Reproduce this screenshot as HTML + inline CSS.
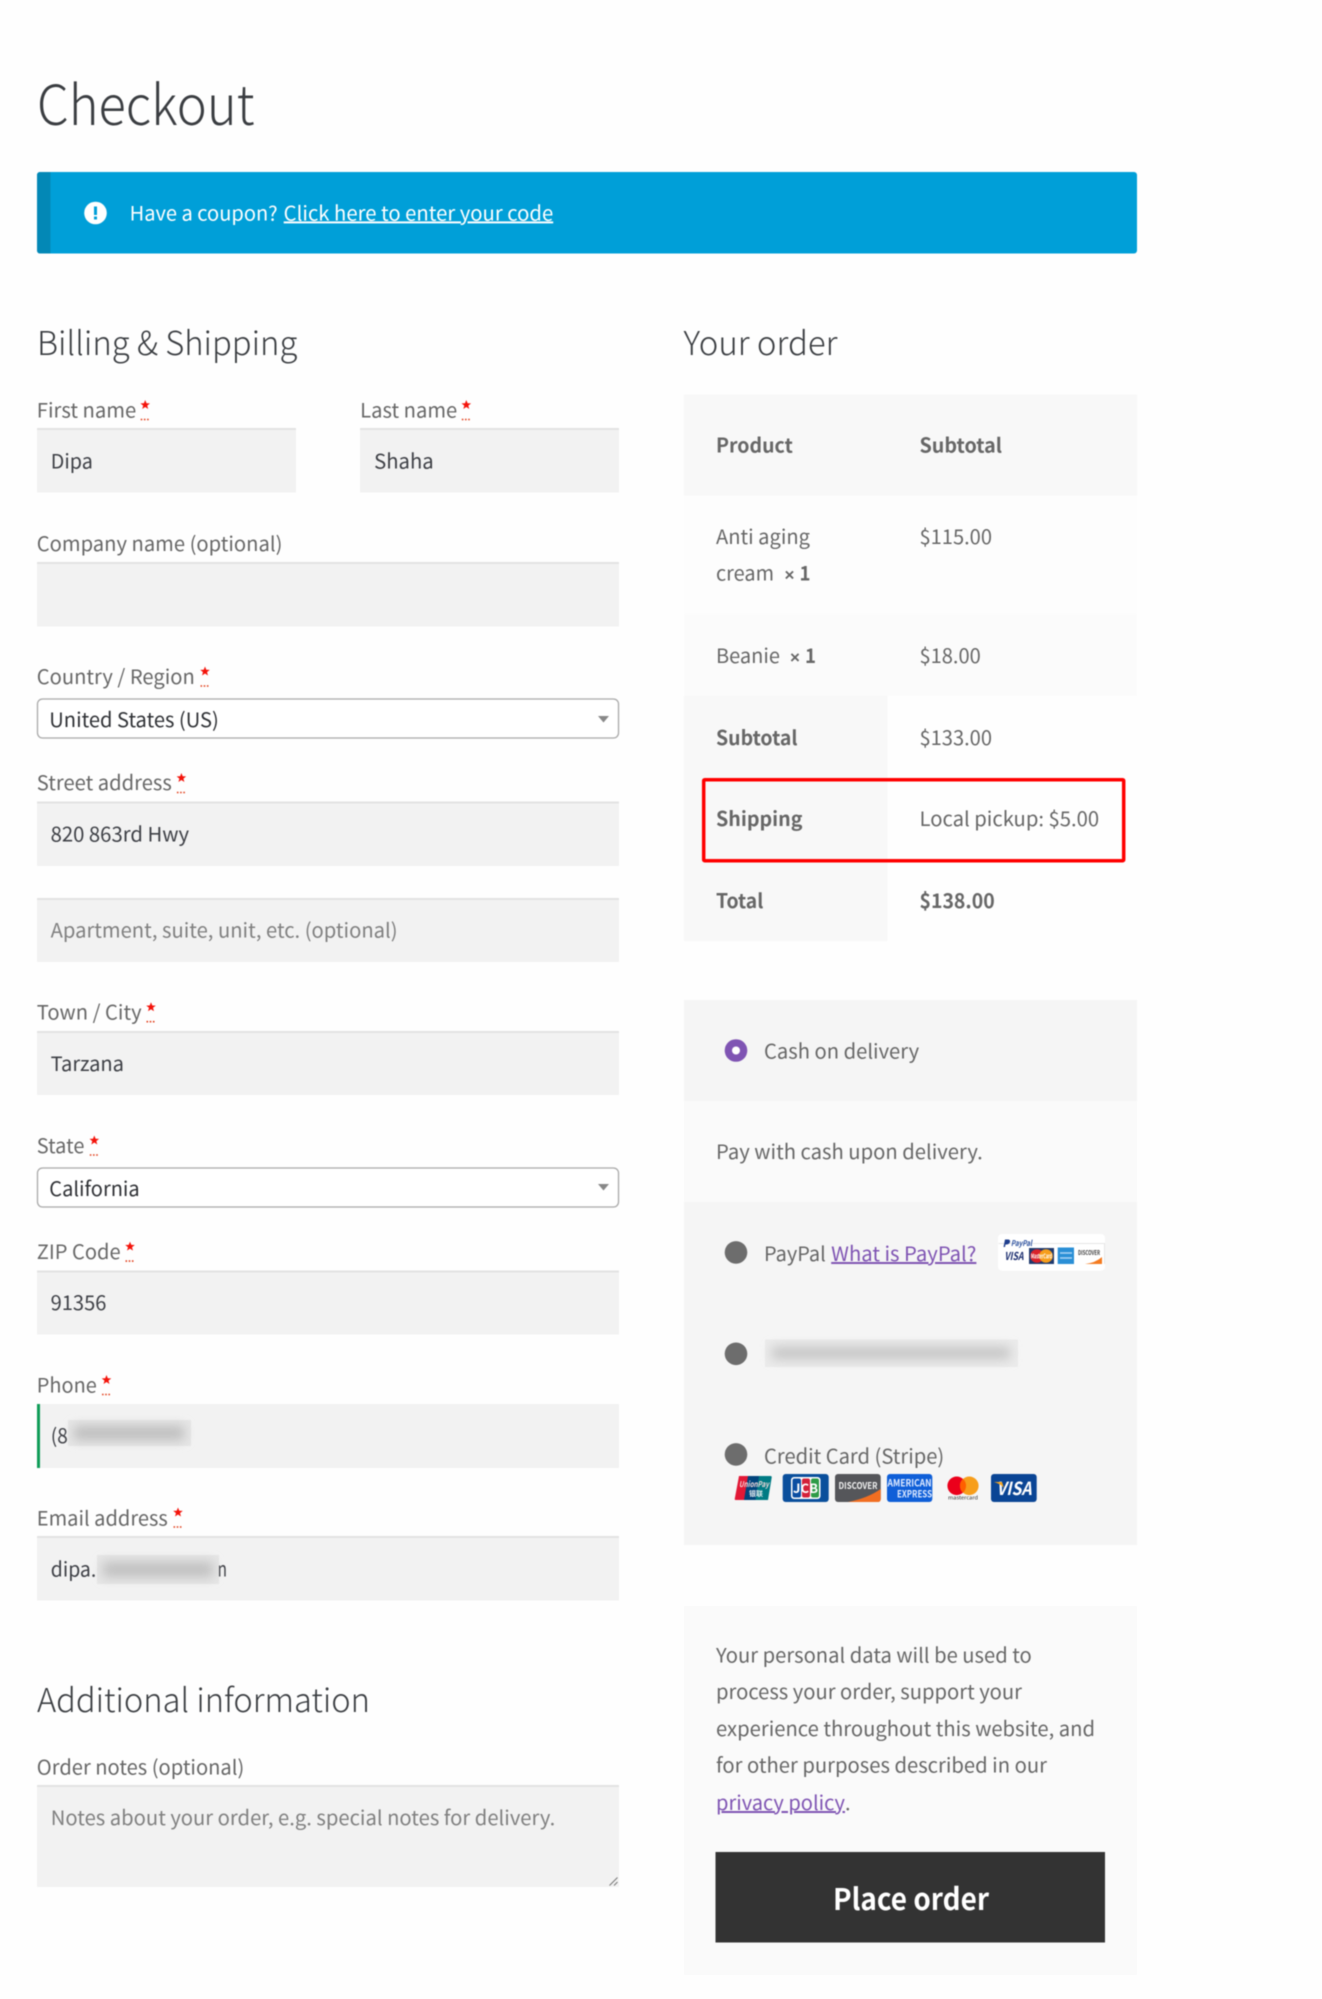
<!DOCTYPE html>
<html lang="en"><head><meta charset="utf-8"><title>Checkout</title>
<style>
html,body{margin:0;padding:0;background:#fff;width:1322px;height:1999px;overflow:hidden}
svg{display:block;filter:blur(.4px)}
text{font-family:"Noto Sans CJK JP","Noto Sans CJK SC","Liberation Sans",sans-serif;font-size:20px;fill:#676767;white-space:pre}
.v{fill:#3e4046}
.s{fill:#2f3135}
.p{fill:#808080}
.b{font-weight:700;fill:#676767}
.h{font-weight:300;fill:#3a3d41;font-size:33px}
.a{fill:#7f54b3;text-decoration:underline}
.x{font-family:"Liberation Sans",sans-serif;font-weight:700;font-size:17px}
.i{fill:#f2f2f2}
.t{fill:#e3e3e3}
</style></head><body>
<svg width="1322" height="1999" viewBox="0 0 1322 1999" xmlns="http://www.w3.org/2000/svg">
<defs>
<filter id="bl" x="-20%" y="-100%" width="140%" height="300%"><feGaussianBlur stdDeviation="5.500"/></filter>
<g id="star"><path d="M0-5 1.300-1.700 4.800-1.600 2 .6 3 4 0 2-3 4-2 .6-4.800-1.600-1.300-1.700Z" fill="#f4130a"/><path d="M-4.500 14.500h9" stroke="#e2401c" stroke-width="1.600" stroke-dasharray="1.600 1.600" fill="none"/></g>
</defs>
<rect width="1322" height="1999" fill="#fefefe"/>

<text class="h" x="37" y="125" style="font-size:55px" textLength="217.500" lengthAdjust="spacingAndGlyphs">Checkout</text>

<rect x="37" y="172" width="1100" height="81.500" rx="3" fill="#009fd8"/>
<path d="M40 172h10.500v81.500H40a3 3 0 0 1-3-3v-75.500a3 3 0 0 1 3-3z" fill="#0388b6"/>
<circle cx="95.500" cy="213" r="11.300" fill="#fff"/>
<rect x="94" y="206.500" width="3" height="8.500" fill="#009fd8"/><rect x="94" y="216.500" width="3" height="3" fill="#009fd8"/>
<text x="129.600" y="220.400" style="fill:#fff" textLength="148" lengthAdjust="spacingAndGlyphs">Have a coupon?</text>
<text x="283.700" y="220.400" style="fill:#fff;text-decoration:underline" textLength="269.500" lengthAdjust="spacingAndGlyphs">Click here to enter your code</text>

<text class="h" x="37" y="355.200" textLength="260.300" lengthAdjust="spacingAndGlyphs">Billing &amp; Shipping</text>
<text class="h" x="683.500" y="355.200" textLength="154" lengthAdjust="spacingAndGlyphs">Your order</text>

<!-- left fields -->
<text x="36.800" y="417.300" textLength="99.500" lengthAdjust="spacingAndGlyphs">First name</text><use href="#star" x="145.200" y="405"/>
<text x="360.200" y="417.300" textLength="97" lengthAdjust="spacingAndGlyphs">Last name</text><use href="#star" x="466.300" y="405"/>
<rect class="i" x="37" y="428" width="259" height="64.500"/><rect class="t" x="37" y="428" width="259" height="2"/>
<rect class="i" x="360" y="428" width="259" height="64.500"/><rect class="t" x="360" y="428" width="259" height="2"/>
<text class="v" x="50.800" y="468.400" textLength="42" lengthAdjust="spacingAndGlyphs">Dipa</text>
<text class="v" x="374.200" y="468.400" textLength="59.500" lengthAdjust="spacingAndGlyphs">Shaha</text>

<text x="36.800" y="551" textLength="245.600" lengthAdjust="spacingAndGlyphs">Company name (optional)</text>
<rect class="i" x="37" y="562" width="582" height="64.500"/><rect class="t" x="37" y="562" width="582" height="2"/>

<text x="36.800" y="684" textLength="158" lengthAdjust="spacingAndGlyphs">Country / Region</text><use href="#star" x="205" y="671.500"/>
<rect x="37.500" y="699" width="581" height="39" rx="5" fill="#fff" stroke="#a9a9a9" stroke-width="1.300"/>
<text class="s" x="49.300" y="726.800" textLength="169.500" lengthAdjust="spacingAndGlyphs">United States (US)</text>
<path d="M598 716h11l-5.500 6.500z" fill="#888"/>

<text x="36.800" y="790.200" textLength="135" lengthAdjust="spacingAndGlyphs">Street address</text><use href="#star" x="181.400" y="778"/>
<rect class="i" x="37" y="801.500" width="582" height="64.500"/><rect class="t" x="37" y="801.500" width="582" height="2"/>
<text class="v" x="50.600" y="841.700" textLength="138.500" lengthAdjust="spacingAndGlyphs">820 863rd Hwy</text>

<rect class="i" x="37" y="898" width="582" height="64"/><rect class="t" x="37" y="898" width="582" height="2"/>
<text class="p" x="50.600" y="937.700" textLength="347" lengthAdjust="spacingAndGlyphs">Apartment, suite, unit, etc. (optional)</text>

<text x="36.800" y="1019.700" textLength="104.800" lengthAdjust="spacingAndGlyphs">Town / City</text><use href="#star" x="151" y="1007.200"/>
<rect class="i" x="37" y="1031" width="582" height="64"/><rect class="t" x="37" y="1031" width="582" height="2"/>
<text class="v" x="50.600" y="1071" textLength="73.400" lengthAdjust="spacingAndGlyphs">Tarzana</text>

<text x="36.800" y="1153" textLength="47.600" lengthAdjust="spacingAndGlyphs">State</text><use href="#star" x="94.300" y="1140.500"/>
<rect x="37.500" y="1168" width="581" height="39" rx="5" fill="#fff" stroke="#a9a9a9" stroke-width="1.300"/>
<text class="s" x="49.300" y="1195.800" textLength="90.400" lengthAdjust="spacingAndGlyphs">California</text>
<path d="M598 1184h11l-5.500 6.500z" fill="#888"/>

<text x="36.800" y="1259" textLength="83.800" lengthAdjust="spacingAndGlyphs">ZIP Code</text><use href="#star" x="130" y="1246.600"/>
<rect class="i" x="37" y="1270.500" width="582" height="64"/><rect class="t" x="37" y="1270.500" width="582" height="2"/>
<text class="v" x="50.600" y="1310" textLength="55.800" lengthAdjust="spacingAndGlyphs">91356</text>

<text x="36.800" y="1392.600" textLength="60" lengthAdjust="spacingAndGlyphs">Phone</text><use href="#star" x="106.500" y="1380"/>
<rect class="i" x="37" y="1404" width="582" height="64"/><rect x="37" y="1404" width="3" height="64" fill="#0f9d58"/>
<text class="v" x="50.800" y="1443" textLength="17" lengthAdjust="spacingAndGlyphs">(8</text>
<rect x="68" y="1420" width="123" height="26" fill="#e6e6e6"/>
<g filter="url(#bl)"><rect x="74" y="1426" width="110" height="14" fill="#bdbdbd"/></g>

<text x="36.800" y="1525.400" textLength="131" lengthAdjust="spacingAndGlyphs">Email address</text><use href="#star" x="178" y="1512.500"/>
<rect class="i" x="37" y="1536" width="582" height="64.500"/><rect class="t" x="37" y="1536" width="582" height="2"/>
<text class="v" x="50.800" y="1576.300" textLength="45.500" lengthAdjust="spacingAndGlyphs">dipa.</text>
<text class="v" x="217.500" y="1576.300" textLength="9.500" lengthAdjust="spacingAndGlyphs">n</text>
<rect x="97" y="1555" width="122" height="29" fill="#e6e6e6"/>
<g filter="url(#bl)"><rect x="103" y="1562" width="110" height="15" fill="#c0c0c0"/></g>

<text class="h" x="37" y="1712" textLength="333" lengthAdjust="spacingAndGlyphs">Additional information</text>
<text x="36.800" y="1774.400" textLength="207.500" lengthAdjust="spacingAndGlyphs">Order notes (optional)</text>
<rect class="i" x="37" y="1785" width="582" height="102"/><rect class="t" x="37" y="1785" width="582" height="2"/>
<text class="p" x="50.800" y="1825.200" textLength="504.500" lengthAdjust="spacingAndGlyphs">Notes about your order, e.g. special notes for delivery.</text>
<path d="M609.500 1885.500l8-8M614 1885.500l3.500-3.500" stroke="#777" stroke-width="1" fill="none"/>

<!-- order table -->
<rect x="684" y="394.500" width="453" height="101" fill="#f8f8f8"/>
<rect x="684" y="495.500" width="453" height="118.500" fill="#fdfdfd"/>
<rect x="684" y="614" width="453" height="82" fill="#fbfbfb"/>
<rect x="684" y="696" width="203.500" height="245" fill="#f8f8f8"/>
<rect x="887.500" y="696" width="249.500" height="245" fill="#fefefe"/>
<text class="b" x="716" y="452.300" textLength="76.800" lengthAdjust="spacingAndGlyphs">Product</text>
<text class="b" x="919.500" y="452.300" textLength="82.500" lengthAdjust="spacingAndGlyphs">Subtotal</text>
<text x="716" y="544" textLength="94" lengthAdjust="spacingAndGlyphs">Anti aging</text>
<text x="716" y="580.700" textLength="58" lengthAdjust="spacingAndGlyphs">cream</text>
<text class="b x" x="784.500" y="580.700">×</text><text class="b" x="799.500" y="580.700" textLength="11" lengthAdjust="spacingAndGlyphs">1</text>
<text x="919.500" y="544" textLength="72.500" lengthAdjust="spacingAndGlyphs">$115.00</text>
<text x="716" y="662.800" textLength="64" lengthAdjust="spacingAndGlyphs">Beanie</text>
<text class="b x" x="790" y="662.800">×</text><text class="b" x="805" y="662.800" textLength="11" lengthAdjust="spacingAndGlyphs">1</text>
<text x="919.500" y="662.800" textLength="61.300" lengthAdjust="spacingAndGlyphs">$18.00</text>
<text class="b" x="716" y="744.900" textLength="81.500" lengthAdjust="spacingAndGlyphs">Subtotal</text>
<text x="919.500" y="744.900" textLength="72.500" lengthAdjust="spacingAndGlyphs">$133.00</text>
<text class="b" x="716" y="826" textLength="86.500" lengthAdjust="spacingAndGlyphs">Shipping</text>
<text x="919.500" y="826" textLength="179.600" lengthAdjust="spacingAndGlyphs">Local pickup: $5.00</text>
<text class="b" x="716" y="907.800" textLength="47.300" lengthAdjust="spacingAndGlyphs">Total</text>
<text class="b" x="919.500" y="907.800" textLength="75.200" lengthAdjust="spacingAndGlyphs">$138.00</text>
<rect x="703.700" y="779.700" width="420" height="81" fill="none" stroke="#f00" stroke-width="3.500" rx="1"/>

<!-- payment -->
<rect x="684" y="1000" width="453" height="545" fill="#f5f5f5"/>
<rect x="684" y="1101" width="453" height="101" fill="#fafafa"/>
<circle cx="736" cy="1050.500" r="11.300" fill="#7f54b3"/><circle cx="736" cy="1050.500" r="4" fill="#fff"/>
<text x="764" y="1058.300" textLength="155.200" lengthAdjust="spacingAndGlyphs">Cash on delivery</text>
<text x="716" y="1159.200" textLength="266.800" lengthAdjust="spacingAndGlyphs">Pay with cash upon delivery.</text>
<circle cx="736" cy="1252.400" r="11.300" fill="#6d6d6d"/>
<text x="764" y="1261" textLength="61.800" lengthAdjust="spacingAndGlyphs">PayPal</text>
<text class="a" x="831.200" y="1261" textLength="145.200" lengthAdjust="spacingAndGlyphs">What is PayPal?</text>

<!-- paypal badge -->
<rect x="998" y="1234" width="107" height="36.700" rx="4" fill="#fff"/>
<path d="M998.500 1243.500H1104.500V1264" stroke="#e6e6e6" fill="none"/>
<path d="M1003.500 1247l1.500-7.500h3.500q2 .5 1.500 2.500t-3 2.500h-1.500l-.5 2.500z" fill="#1f3f8e"/>
<text x="1011" y="1246" style="font-size:8px;font-weight:700;font-style:italic;fill:#2a4f9e" textLength="21" lengthAdjust="spacingAndGlyphs">PayPal</text>
<text x="1004.500" y="1260" style="font-size:11px;font-weight:700;font-style:italic;fill:#1a2c6e" textLength="19" lengthAdjust="spacingAndGlyphs">VISA</text>
<rect x="1029" y="1248" width="25" height="16" fill="#1f3a6e"/>
<circle cx="1037" cy="1256" r="6.800" fill="#d9222a"/><circle cx="1046" cy="1256" r="6.800" fill="#f79e1b"/>
<text x="1031" y="1258.500" style="font-size:6.500px;font-weight:700;fill:#fff" textLength="21" lengthAdjust="spacingAndGlyphs">MasterCard</text>
<rect x="1057.700" y="1247.500" width="16.300" height="16.500" fill="#2a8fd6"/>
<path d="M1060 1253h12M1060 1258h12" stroke="#a9d5f5" stroke-width="1.500"/>
<text x="1078" y="1255" style="font-size:6.500px;font-weight:700;fill:#444" textLength="22" lengthAdjust="spacingAndGlyphs">DISCOVER</text>
<path d="M1085 1264q10-1 17-7v7z" fill="#f47b20"/>

<circle cx="736" cy="1353.800" r="11.300" fill="#6d6d6d"/>
<rect x="765" y="1339.500" width="253" height="27.500" fill="#ebebeb"/>
<g filter="url(#bl)"><rect x="772" y="1347" width="238" height="12" fill="#c4c4c4"/></g>

<circle cx="736" cy="1454.400" r="11.300" fill="#6d6d6d"/>
<text x="764" y="1463.600" textLength="180.200" lengthAdjust="spacingAndGlyphs">Credit Card (Stripe)</text>

<!-- UnionPay -->
<path d="M739 1476h10l-4 24h-9.500q-1 0-.7-1.500z" fill="#e21836"/>
<path d="M748 1476h12l-4 24h-12z" fill="#00447c"/>
<path d="M759 1476h11.500q1.500 0 1.200 1.500l-3.700 22.500h-12.500z" fill="#007b84"/>
<text x="739" y="1487" style="font-size:8px;font-weight:700;font-style:italic;fill:#f3d9d9" textLength="30" lengthAdjust="spacingAndGlyphs">UnionPay</text>
<text x="749" y="1496" style="font-size:7px;font-weight:700;fill:#e8eef0" textLength="14" lengthAdjust="spacingAndGlyphs">银联</text>

<!-- JCB -->
<rect x="782.700" y="1474" width="46" height="28" rx="3" fill="#0a4f9c"/>
<rect x="791" y="1477" width="29.500" height="22" rx="3" fill="#fff"/>
<rect x="792.500" y="1478.500" width="8.500" height="19" rx="2" fill="#0b4ea2"/>
<rect x="802" y="1478.500" width="8" height="19" rx="2" fill="#d3213a"/>
<rect x="811" y="1478.500" width="8" height="19" rx="2" fill="#2e9b47"/>
<text x="793" y="1493" style="font-size:13px;font-weight:700;fill:#fff" textLength="25" lengthAdjust="spacingAndGlyphs">JCB</text>

<!-- Discover -->
<rect x="835" y="1474" width="45.700" height="28" rx="3" fill="#55565a"/>
<path d="M848 1502q20-4 32.700-13v10q0 3-3 3z" fill="#f26e21"/>
<text x="838.500" y="1489" style="font-size:9.500px;font-weight:700;fill:#f0f0f0" textLength="39" lengthAdjust="spacingAndGlyphs">DISCOVER</text>

<!-- Amex -->
<rect x="887" y="1474" width="45.300" height="28" rx="3" fill="#0f5fd8"/>
<text x="887.500" y="1486.500" style="font-size:10px;font-weight:700;fill:#dfeaff" textLength="44" lengthAdjust="spacingAndGlyphs">AMERICAN</text>
<text x="897" y="1497.500" style="font-size:10px;font-weight:700;fill:#dfeaff" textLength="35" lengthAdjust="spacingAndGlyphs">EXPRESS</text>

<!-- Mastercard -->
<circle cx="956.700" cy="1485.800" r="9.300" fill="#eb001b"/><circle cx="969.300" cy="1485.800" r="9.300" fill="#f79e1b"/>
<path d="M963 1478.900a9.300 9.300 0 0 1 0 13.800a9.300 9.300 0 0 1 0-13.800z" fill="#ff5f00"/>
<text x="948" y="1499.500" style="font-size:5px;fill:#333" textLength="30" lengthAdjust="spacingAndGlyphs">mastercard</text>

<!-- Visa -->
<rect x="991" y="1474" width="45.700" height="28" rx="3" fill="#0a4595"/>
<text x="996.500" y="1495" style="font-size:18px;font-weight:700;font-style:italic;fill:#fff" textLength="35" lengthAdjust="spacingAndGlyphs">VISA</text>
<path d="M994 1482h8l2 6q-3-4-10-6z" fill="#f7a823"/>

<!-- terms -->
<rect x="684" y="1606" width="453" height="369" fill="#fafafa"/>
<text x="716" y="1662.700" textLength="315.800" lengthAdjust="spacingAndGlyphs">Your personal data will be used to</text>
<text x="716" y="1699" textLength="306" lengthAdjust="spacingAndGlyphs">process your order, support your</text>
<text x="716" y="1736" textLength="379" lengthAdjust="spacingAndGlyphs">experience throughout this website, and</text>
<text x="716" y="1772.700" textLength="331" lengthAdjust="spacingAndGlyphs">for other purposes described in our</text>
<text class="a" x="716" y="1810" textLength="129" lengthAdjust="spacingAndGlyphs">privacy policy</text>
<text x="845" y="1810">.</text>
<rect x="715.500" y="1852" width="389.500" height="90.500" fill="#333"/>
<text x="833" y="1910" style="fill:#fff;font-weight:700;font-size:30px" textLength="156" lengthAdjust="spacingAndGlyphs">Place order</text>
</svg>
</body></html>
